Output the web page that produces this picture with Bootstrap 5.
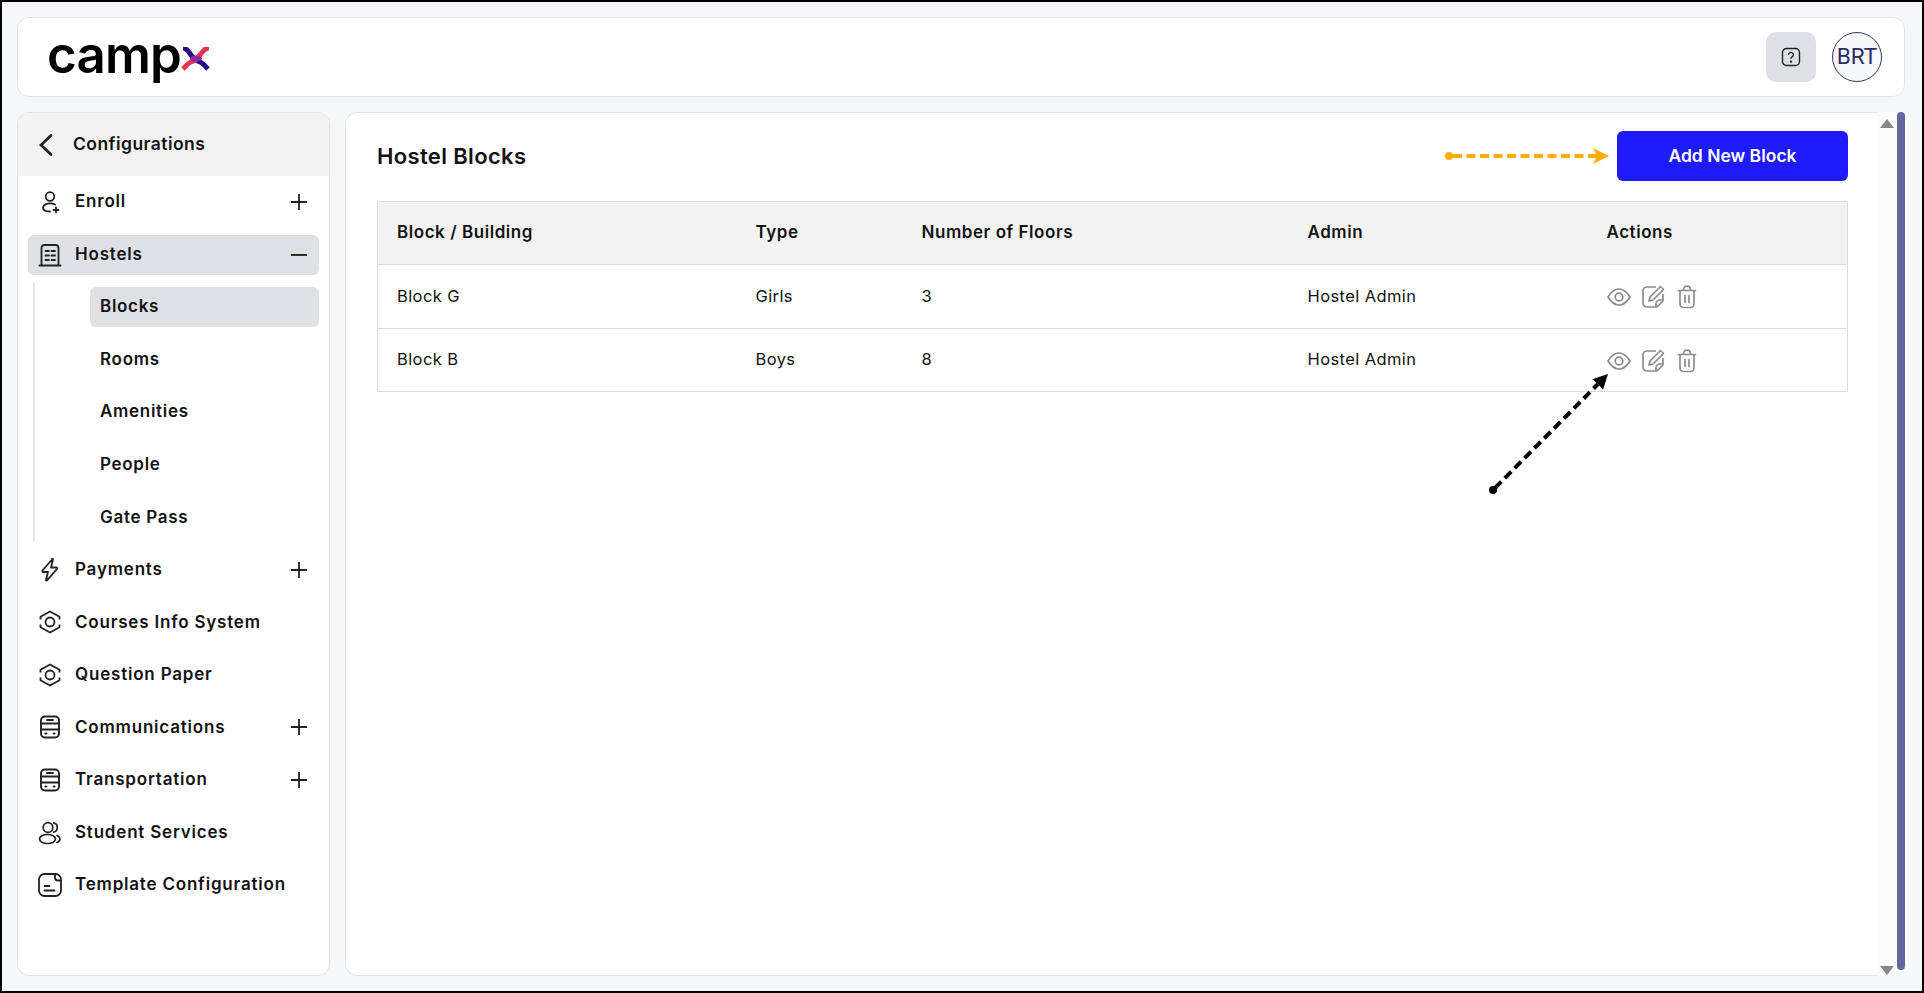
<!DOCTYPE html>
<html lang="en">
<head>
<meta charset="utf-8">
<title>Hostel Blocks</title>
<link href="https://cdn.jsdelivr.net/npm/bootstrap@5.3.0/dist/css/bootstrap.min.css" rel="stylesheet">
<style>
html,body{height:100%;margin:0}
body{background:#f6f7f9;font-family:"Inter","Liberation Sans",sans-serif;color:#121212;overflow:hidden}
.frame{height:993px;width:1924px;border:2px solid #000;padding:15px 17px 15px 15px;gap:15px}
.top-card{height:80px;background:#fff;border:1px solid #e2e2e2;border-radius:12px;padding:0 22px 0 29px}
.logo-box{margin-top:-5px}
.logo-word{font-size:51px;font-weight:600;line-height:1;color:#000;letter-spacing:-.8px}
.help-btn{width:50px;height:50px;background:#dfe0e5;border-radius:10px;border:0}
.avatar-ring{width:50px;height:50px;border-radius:50%;border:1px solid #34336f;background:#f8f9fa;color:#2d2b6b;font-family:"Roboto",sans-serif;font-size:22.500px}
.body-row{flex:1;min-height:0;gap:15px}
.side-panel{width:313px;flex:none;background:#fff;border:1px solid #e2e2e2;border-radius:12px;overflow:hidden}
.side-head{height:63px;background:#f2f2f2;padding:0 0 0 20px;gap:19px;font-size:17.500px;font-weight:600;letter-spacing:.45px}
.side-menu{padding:6px 10px 0 10px;gap:12.550px}
.side-item{height:40px;border-radius:6px;padding:0 10px 0 10px;font-size:17px;font-weight:600;letter-spacing:.8px}
.side-item svg.ico{width:24px;height:24px;margin-right:13px;flex:none}
.side-item.on,.sub-item.on{background:#dfe0e5}
.sub-group{margin:-5px 0 -5px 5px;padding:5px 0;border-left:2px solid #e4e4e4;gap:12.550px}
.sub-item{height:40px;margin-left:55px;border-radius:6px;padding:0 10px;font-size:17px;font-weight:600;letter-spacing:.7px}
.sign-ico{width:20px;height:20px;flex:none}
.main-panel{flex:1;min-width:0;background:#fff;border:1px solid #e2e2e2;border-radius:12px;position:relative;padding:18px 56px 0 31px}
.page-title{font-size:22px;font-weight:600;margin:0;letter-spacing:.35px}
.add-btn{width:231px;height:50px;background:#1f1bfa;border:0;border-radius:6px;color:#fff;font-size:17.500px;font-weight:600}
.add-btn:hover{background:#1f1bfa;color:#fff}
.block-table{margin:20px 0 0;border:1px solid #dcdcdc;table-layout:fixed;width:1471px;font-size:16.500px}
.block-table th{background:#f2f2f2;height:63px;vertical-align:middle;font-weight:600;font-size:17px;letter-spacing:.55px;padding:0 0 0 19px;border-bottom:1px solid #dcdcdc;color:#121212}
.block-table td{height:63.500px;vertical-align:middle;font-weight:400;letter-spacing:.4px;padding:0 0 0 19px;border-bottom:1px solid #dcdcdc;color:#121212}
.act-ico{width:24px;height:24px;margin-right:10px}
.pointer{position:absolute;left:0;top:0;overflow:visible;pointer-events:none}
.scroll-rail{position:absolute;right:-1px;top:-1px;bottom:-1px;width:27px;background:#fbfbfb;border-radius:0 12px 12px 0}
.scroll-thumb{position:absolute;right:0;top:0;bottom:6px;width:8px;background:#666599;border-radius:4px}
.scroll-up,.scroll-down{position:absolute;left:2px;width:0;height:0;border-left:7px solid transparent;border-right:7px solid transparent}
.scroll-up{top:7px;border-bottom:9px solid #888}
.scroll-down{bottom:1px;border-top:9px solid #888}
</style>
</head>
<body>
<div class="frame d-flex flex-column">
  <header class="top-card d-flex align-items-center justify-content-between">
    <div class="logo-box d-flex align-items-center">
      <span class="logo-word">camp</span>
      <svg width="30" height="24" viewBox="0 0 30 24" style="margin-top:8px"><path d="M2 1c4 0 5 3 8 7s6 6 9 7 6 5 8 7" fill="none" stroke="#2a0a8c" stroke-width="5"/><path d="M28 1c-4 0-6 3-9 7s-6 6-9 7-6 5-8 7" fill="none" stroke="#e8344e" stroke-width="5"/><ellipse cx="15" cy="11.500" rx="6" ry="3" fill="#8a2aa0"/></svg>
    </div>
    <div class="d-flex align-items-center gap-3">
      <button class="help-btn d-flex align-items-center justify-content-center" aria-label="Help">
        <svg width="20" height="20" viewBox="0 0 20 20" fill="none" stroke="#222" stroke-width="1.400"><rect x="1.500" y="1.500" width="17" height="17" rx="4"/><path d="M7.600 7.800a2.400 2.400 0 1 1 3.600 2.100c-.8.500-1.200 1-1.200 1.900"/><circle cx="10" cy="14.600" r=".5" fill="#222"/></svg>
      </button>
      <div class="avatar-ring d-flex align-items-center justify-content-center">BRT</div>
    </div>
  </header>
  <div class="body-row d-flex">
    <aside class="side-panel d-flex flex-column">
      <div class="side-head d-flex align-items-center">
        <svg width="16" height="24" viewBox="0 0 16 24" fill="none" stroke="#222" stroke-width="2.800" stroke-linecap="round"><path d="M13 2.500 3 12l10 9.500"/></svg>
        <span>Configurations</span>
      </div>
      <nav class="side-menu d-flex flex-column">
        <div class="side-item d-flex align-items-center">
          <svg class="ico" viewBox="0 0 24 24" fill="none" stroke="#222" stroke-width="1.800" stroke-linecap="round"><circle cx="12" cy="6.500" r="4.300"/><path d="M17 14.500c-4-2-11-1.500-12 3 0 2.500 3 4 7 4"/><path d="M18 17.500v5M15.500 20h5"/></svg>
          <span class="flex-grow-1">Enroll</span>
          <svg class="sign-ico" viewBox="0 0 20 20" stroke="#222" stroke-width="1.800"><path d="M2 10h16M10 2v16"/></svg>
        </div>
        <div class="side-item on d-flex align-items-center">
          <svg class="ico" viewBox="0 0 24 24" fill="none" stroke="#222" stroke-width="1.800" stroke-linecap="round"><path d="M3.500 22V5c0-2 1-3 3-3h11c2 0 3 1 3 3v17M1.500 22.500h21"/><path d="M7.500 8h3.500M13.500 8H17M7.500 12.500H11M13.500 12.500H17M7.500 17H11M13.500 17H17"/></svg>
          <span class="flex-grow-1">Hostels</span>
          <svg class="sign-ico" viewBox="0 0 20 20" stroke="#222" stroke-width="1.800"><path d="M2 10h16"/></svg>
        </div>
        <div class="sub-group d-flex flex-column">
          <div class="sub-item on d-flex align-items-center">Blocks</div>
          <div class="sub-item d-flex align-items-center">Rooms</div>
          <div class="sub-item d-flex align-items-center">Amenities</div>
          <div class="sub-item d-flex align-items-center">People</div>
          <div class="sub-item d-flex align-items-center">Gate Pass</div>
        </div>
        <div class="side-item d-flex align-items-center">
          <svg class="ico" viewBox="0 0 24 24" fill="none" stroke="#222" stroke-width="1.800" stroke-linejoin="round"><path d="M14 1.500 4.500 12.500c-.5.600 0 1.500.8 1.500H10l-2 8c0 .6.600.8 1 .3l10-11.300c.5-.6 0-1.500-.8-1.500H13l2-8c.1-.7-.6-.8-1-.5z"/></svg>
          <span class="flex-grow-1">Payments</span>
          <svg class="sign-ico" viewBox="0 0 20 20" stroke="#222" stroke-width="1.800"><path d="M2 10h16M10 2v16"/></svg>
        </div>
        <div class="side-item d-flex align-items-center">
          <svg class="ico" viewBox="0 0 24 24" fill="none" stroke="#222" stroke-width="1.800" stroke-linejoin="round"><path d="M2.500 9.500V6.700L12 1.500l9.500 5.200v2.800M21.500 14.500v2.800L12 22.500l-9.500-5.200v-2.800"/><circle cx="12" cy="12" r="4.500"/></svg>
          <span class="flex-grow-1">Courses Info System</span>
        </div>
        <div class="side-item d-flex align-items-center">
          <svg class="ico" viewBox="0 0 24 24" fill="none" stroke="#222" stroke-width="1.800" stroke-linejoin="round"><path d="M2.500 9.500V6.700L12 1.500l9.500 5.200v2.800M21.500 14.500v2.800L12 22.500l-9.500-5.200v-2.800"/><circle cx="12" cy="12" r="4.500"/></svg>
          <span class="flex-grow-1">Question Paper</span>
        </div>
        <div class="side-item d-flex align-items-center">
          <svg class="ico" viewBox="0 0 24 24" fill="none" stroke="#222" stroke-width="1.900" stroke-linecap="round"><rect x="3" y="1.500" width="18" height="21" rx="4"/><path d="M3 8.500h18M3 14.500h18M9 5h6"/><path d="M7.500 18.500h.8M15.700 18.500h.8" stroke-width="2.200"/></svg>
          <span class="flex-grow-1">Communications</span>
          <svg class="sign-ico" viewBox="0 0 20 20" stroke="#222" stroke-width="1.800"><path d="M2 10h16M10 2v16"/></svg>
        </div>
        <div class="side-item d-flex align-items-center">
          <svg class="ico" viewBox="0 0 24 24" fill="none" stroke="#222" stroke-width="1.900" stroke-linecap="round"><rect x="3" y="1.500" width="18" height="21" rx="4"/><path d="M3 8.500h18M3 14.500h18M9 5h6"/><path d="M7.500 18.500h.8M15.700 18.500h.8" stroke-width="2.200"/></svg>
          <span class="flex-grow-1">Transportation</span>
          <svg class="sign-ico" viewBox="0 0 20 20" stroke="#222" stroke-width="1.800"><path d="M2 10h16M10 2v16"/></svg>
        </div>
        <div class="side-item d-flex align-items-center">
          <svg class="ico" viewBox="0 0 24 24" fill="none" stroke="#222" stroke-width="1.700" stroke-linecap="round"><circle cx="10" cy="6.500" r="4.800"/><ellipse cx="9.500" cy="18" rx="8" ry="4.500"/><path d="M15.500 1.800a4.800 4.800 0 0 1 0 9.400M19 14.500c4 1.500 4 5.500 0 7"/></svg>
          <span class="flex-grow-1">Student Services</span>
        </div>
        <div class="side-item d-flex align-items-center">
          <svg class="ico" viewBox="0 0 24 24" fill="none" stroke="#222" stroke-width="1.800" stroke-linecap="round"><rect x="1" y="1" width="22" height="22" rx="5.500"/><path d="M17 1v3.500a3 3 0 0 0 3 3h3M6.500 13h5M6.500 17.500h10"/></svg>
          <span class="flex-grow-1">Template Configuration</span>
        </div>
      </nav>
    </aside>
    <main class="main-panel">
      <div class="d-flex align-items-center justify-content-between">
        <h1 class="page-title">Hostel Blocks</h1>
        <button class="btn add-btn">Add New Block</button>
      </div>
      <table class="table block-table">
        <colgroup><col style="width:359px"><col style="width:166px"><col style="width:386px"><col style="width:299px"><col></colgroup>
        <thead><tr><th>Block / Building</th><th>Type</th><th>Number of Floors</th><th>Admin</th><th>Actions</th></tr></thead>
        <tbody>
          <tr><td>Block G</td><td>Girls</td><td>3</td><td>Hostel Admin</td><td>
            <svg class="act-ico" viewBox="0 0 24 24" fill="none" stroke="#8c8c8c" stroke-width="1.700"><path d="M1 12c3-5 6.500-8 11-8s8 3 11 8c-3 5-6.500 8-11 8S4 17 1 12z"/><circle cx="12" cy="12" r="3.800"/></svg><svg class="act-ico" viewBox="0 0 24 24" fill="none" stroke="#8c8c8c" stroke-width="1.700" stroke-linejoin="round"><path d="M22 9v7l-6 6H6a4 4 0 0 1-4-4V6a4 4 0 0 1 4-4h9"/><path d="M22 15h-3a4 4 0 0 0-4 4v3"/><path d="M8 16l1-4L19.500 1.500l3 3L12 15z"/></svg><svg class="act-ico" viewBox="0 0 24 24" fill="none" stroke="#8c8c8c" stroke-width="1.700" stroke-linecap="round"><path d="M3.500 5.500h17M8.500 5c0-2.500 1.500-3.800 3.500-3.800s3.500 1.300 3.500 3.800"/><path d="M5 6v13a3.500 3.500 0 0 0 3.500 3.500h7A3.500 3.500 0 0 0 19 19V6"/><path d="M10 10.500v7M14 10.500v7"/></svg></td></tr>
          <tr><td>Block B</td><td>Boys</td><td>8</td><td>Hostel Admin</td><td>
            <svg class="act-ico" viewBox="0 0 24 24" fill="none" stroke="#8c8c8c" stroke-width="1.700"><path d="M1 12c3-5 6.500-8 11-8s8 3 11 8c-3 5-6.500 8-11 8S4 17 1 12z"/><circle cx="12" cy="12" r="3.800"/></svg><svg class="act-ico" viewBox="0 0 24 24" fill="none" stroke="#8c8c8c" stroke-width="1.700" stroke-linejoin="round"><path d="M22 9v7l-6 6H6a4 4 0 0 1-4-4V6a4 4 0 0 1 4-4h9"/><path d="M22 15h-3a4 4 0 0 0-4 4v3"/><path d="M8 16l1-4L19.500 1.500l3 3L12 15z"/></svg><svg class="act-ico" viewBox="0 0 24 24" fill="none" stroke="#8c8c8c" stroke-width="1.700" stroke-linecap="round"><path d="M3.500 5.500h17M8.500 5c0-2.500 1.500-3.800 3.500-3.800s3.500 1.300 3.500 3.800"/><path d="M5 6v13a3.500 3.500 0 0 0 3.500 3.500h7A3.500 3.500 0 0 0 19 19V6"/><path d="M10 10.500v7M14 10.500v7"/></svg></td></tr>
        </tbody>
      </table>
      <div class="scroll-rail">
        <span class="scroll-up"></span>
        <span class="scroll-down"></span>
        <span class="scroll-thumb"></span>
      </div>
      <svg class="pointer" width="100%" height="100%">
        <circle cx="1103" cy="43" r="4" fill="#ffad06"/>
        <path d="M1107 43H1251" stroke="#ffad06" stroke-width="4" stroke-dasharray="9 4.500"/>
        <path d="M1263 43l-16 -8 4 8-4 8z" fill="#ffad06"/>
        <circle cx="1147" cy="377" r="4" fill="#000"/>
        <path d="M1149 375 1252 271" stroke="#000" stroke-width="4" stroke-dasharray="9 5"/>
        <path d="M1262 261l-15.700 5.300 5.700 4.700 5 5.700z" fill="#000"/>
      </svg>
    </main>
  </div>
</div>
<script src="https://cdn.jsdelivr.net/npm/bootstrap@5.3.0/dist/js/bootstrap.bundle.min.js"></script>
</body>
</html>
